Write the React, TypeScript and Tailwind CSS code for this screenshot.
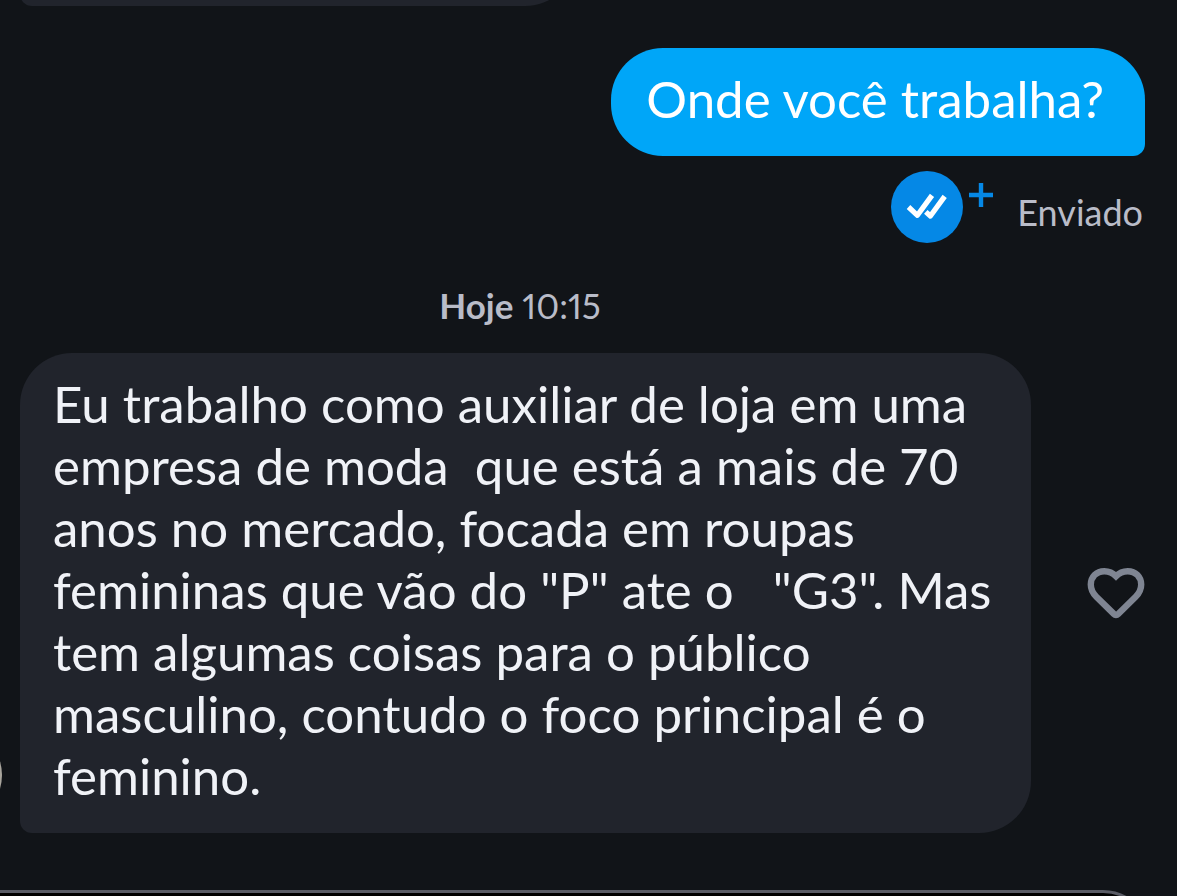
function DoubleCheck() {
  return (
    <svg className="size-[72px]" viewBox="0 0 72 72" fill="none" aria-hidden="true">
      <circle cx="36" cy="36" r="36" fill="#0588e6" />
      <path
        d="M17.5 36 26.4 44.3 41 24.4M34.8 40.8 39.4 45 53.7 25.4"
        stroke="#fff"
        strokeWidth="5.2"
        strokeLinejoin="round"
      />
    </svg>
  );
}

function Plus() {
  return (
    <svg className="mt-3 size-6" viewBox="0 0 24 24" fill="none" aria-hidden="true">
      <path d="M12 0V24M0 12H24" stroke="#0588e6" strokeWidth="4.4" />
    </svg>
  );
}

function Heart() {
  return (
    <svg className="h-[52px] w-[58px]" viewBox="0 0 58 52" fill="none" aria-hidden="true">
      <path
        d="M29 9.2C25.8 5.8 21.9 4.2 17.3 4.2 9.3 4.2 3.8 10 3.8 17.6c0 5 2 8.7 5.5 12.2L26.8 46.9c1.4 1.4 3 1.4 4.4 0L48.7 29.8c3.5-3.5 5.5-7.2 5.5-12.2 0-7.6-5.5-13.4-13.5-13.4-4.6 0-8.5 1.6-11.7 5Z"
        stroke="#7f8592"
        strokeWidth="6.4"
        strokeLinejoin="miter"
      />
    </svg>
  );
}

const reply = [
  'Eu trabalho como auxiliar de loja em uma',
  'empresa de moda  que está a mais de 70',
  'anos no mercado, focada em roupas',
  'femininas que vão do "P" ate o   "G3". Mas',
  'tem algumas coisas para o público',
  'masculino, contudo o foco principal é o',
  'feminino.',
].join('\n');

export default function App() {
  return (
    <main className="flex h-screen flex-col overflow-hidden bg-[#111418] font-['Lato',sans-serif]">
      <div className="flex h-[6px] shrink-0 items-end overflow-hidden pl-5">
        <div className="h-[108px] w-[557px] shrink-0 rounded-[52px] rounded-bl-[12px] bg-[#21242c]" />
      </div>

      <section className="mt-[42px] flex flex-col items-end pr-8">
        <p className="rounded-[52px] rounded-br-[12px] bg-[#00a6f8] pt-[20px] pr-[41px] pb-[26px] pl-[35px] text-[51px] leading-[62px] text-white">
          Onde você trabalha?
        </p>
        <div className="mt-[15px] flex pr-[2px] text-[36px] text-[#b9bcc8]">
          <DoubleCheck />
          <div className="ml-[6px]">
            <Plus />
          </div>
          <span className="ml-6 pt-[5px] leading-[72px]">Enviado</span>
        </div>
      </section>

      <p className="mt-[35px] mr-[137px] text-center text-[35px] leading-[44px] text-[#b9bcc8] proportional-nums">
        <strong className="font-bold">Hoje</strong> 10:15
      </p>

      <section className="mt-[26px] flex items-center pr-8">
        <div className="relative w-5 shrink-0 self-stretch">
          <div className="absolute right-[18px] bottom-[10px] size-24 rounded-full bg-[#a9a59d]" />
        </div>
        <p className="w-[1011px] rounded-[52px] rounded-bl-[12px] bg-[#21242c] pt-[20px] pb-[26px] pl-[33px] text-[51px] leading-[62px] whitespace-pre text-[#f0f2f7]">
          {reply}
        </p>
        <button type="button" aria-label="Curtir" className="ml-auto shrink-0">
          <Heart />
        </button>
      </section>

      <div className="mt-[57px] mr-[26px] -ml-20 h-24 shrink-0 rounded-[48px] border-[3px] border-[#5a5c66] bg-black" />
    </main>
  );
}
